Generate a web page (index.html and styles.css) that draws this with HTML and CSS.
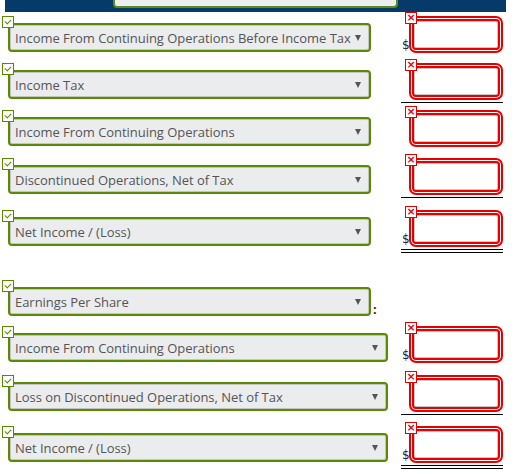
FILE: index.html
```html
<!DOCTYPE html>
<html>
<head>
<meta charset="utf-8">
<link rel="stylesheet" href="styles.css">
</head>
<body>
<div class="topbar"><div class="prev-select"></div></div>
<div class="sheet">
  <div class="row r1">
    <div class="left"><div class="sel"><span class="chk"></span><span class="txt">Income From Continuing Operations Before Income Tax</span><span class="arrow"></span></div></div>
    <div class="right"><span class="err">×</span><span class="dollar">$</span><div class="inp"></div></div>
  </div>
  <div class="row r2">
    <div class="left"><div class="sel"><span class="chk"></span><span class="txt">Income Tax</span><span class="arrow"></span></div></div>
    <div class="right single"><span class="err">×</span><div class="inp"></div></div>
  </div>
  <div class="row r3">
    <div class="left"><div class="sel"><span class="chk"></span><span class="txt">Income From Continuing Operations</span><span class="arrow"></span></div></div>
    <div class="right"><span class="err">×</span><div class="inp"></div></div>
  </div>
  <div class="row r4">
    <div class="left"><div class="sel"><span class="chk"></span><span class="txt">Discontinued Operations, Net of Tax</span><span class="arrow"></span></div></div>
    <div class="right single"><span class="err">×</span><div class="inp"></div></div>
  </div>
  <div class="row r5">
    <div class="left"><div class="sel"><span class="chk"></span><span class="txt">Net Income / (Loss)</span><span class="arrow"></span></div></div>
    <div class="right double"><span class="err">×</span><span class="dollar">$</span><div class="inp"></div></div>
  </div>
  <div class="row r6">
    <div class="left"><div class="sel"><span class="chk"></span><span class="txt">Earnings Per Share</span><span class="arrow"></span></div><span class="colon">:</span></div>
  </div>
  <div class="row r7">
    <div class="left"><div class="sel wide"><span class="chk"></span><span class="txt">Income From Continuing Operations</span><span class="arrow"></span></div></div>
    <div class="right"><span class="err">×</span><span class="dollar">$</span><div class="inp"></div></div>
  </div>
  <div class="row r8">
    <div class="left"><div class="sel wide"><span class="chk"></span><span class="txt">Loss on Discontinued Operations, Net of Tax</span><span class="arrow"></span></div></div>
    <div class="right single"><span class="err">×</span><div class="inp"></div></div>
  </div>
  <div class="row r9">
    <div class="left"><div class="sel wide"><span class="chk"></span><span class="txt">Net Income / (Loss)</span><span class="arrow"></span></div></div>
    <div class="right double"><span class="err">×</span><span class="dollar">$</span><div class="inp"></div></div>
  </div>
</div>
</body>
</html>
```
FILE: styles.css
```css
html, body {
  margin: 0;
  padding: 0;
  background: #fff;
  font-family: "Open Sans", "DejaVu Sans", sans-serif;
}
.topbar {
  margin-left: 5px;
  width: 501px;
  height: 12px;
  background: #063a6b;
  display: flex;
}
.prev-select {
  margin-left: 108px;
  width: 281px;
  height: 6px;
  background: #eceef0;
  border: 2px solid #5f8a1c;
  border-top: none;
  border-radius: 0 0 4px 4px;
}
.sheet {
  display: flex;
  flex-direction: column;
}
.row {
  display: flex;
  align-items: flex-start;
}
.r1 { margin-top: 3px; height: 47px; }
.r2 { height: 47px; }
.r3 { height: 48px; }
.r4 { height: 52px; }
.r5 { height: 70px; }
.r6 { height: 46px; }
.r7 { height: 49px; }
.r8 { height: 51px; }
.r9 { height: 49px; }
.left {
  width: 393px;
  padding: 8px 0 0 8px;
  display: flex;
  align-items: flex-end;
}
.sel {
  position: relative;
  box-sizing: border-box;
  width: 363px;
  height: 29px;
  border: 2px solid #5b8a00;
  border-radius: 4px;
  background: #ebecee;
  box-shadow: inset 0 0 0 1px #c4c4c4;
  display: flex;
  align-items: center;
  padding-left: 5px;
  color: #555;
  font-size: 13px;
  letter-spacing: -0.04px;
}
.sel.wide { width: 380px; }
.txt { white-space: nowrap; }
.arrow {
  position: absolute;
  right: 8px;
  top: 10px;
  width: 0;
  height: 0;
  border-left: 3.5px solid transparent;
  border-right: 3.5px solid transparent;
  border-top: 6px solid #555;
}
.chk {
  position: absolute;
  left: -8px;
  top: -9px;
  box-sizing: border-box;
  width: 12px;
  height: 12px;
  background: #fff;
  border: 1px solid #5b8a00;
}
.chk::after {
  content: "";
  position: absolute;
  left: 3px;
  top: 1px;
  width: 3px;
  height: 5px;
  border-right: 1.5px solid #5b8a00;
  border-bottom: 1.5px solid #5b8a00;
  transform: rotate(45deg);
}
.colon {
  font-size: 13px;
  font-weight: bold;
  color: #5a1010;
  margin-left: 2px;
  line-height: 1;
}
.right {
  position: relative;
  margin-top: -3px;
  width: 91px;
  padding: 7px 0 5px 11px;
}
.right.single { border-bottom: 1px solid #000; }
.right.double { border-bottom: 4px double #000; }
.inp {
  box-sizing: border-box;
  width: 88px;
  height: 31px;
  border: 2px solid #e60000;
  border-radius: 4px;
  background: #fff;
  box-shadow: 0 0 0 1px #fff, 0 0 0 3px #e60000, inset 0 0 0 1px #c8c8c8;
}
.err {
  position: absolute;
  z-index: 2;
  left: 4px;
  top: 0;
  box-sizing: border-box;
  width: 12px;
  height: 12px;
  background: #fff;
  border: 1px solid #e60000;
  color: #e60000;
  font-family: "DejaVu Sans", sans-serif;
  font-weight: bold;
  font-size: 11px;
  line-height: 9px;
  text-align: center;
}
.dollar {
  position: absolute;
  left: 1px;
  bottom: 4px;
  font-family: "DejaVu Sans", sans-serif;
  font-size: 12px;
  line-height: 1;
  color: #222;
}
```
